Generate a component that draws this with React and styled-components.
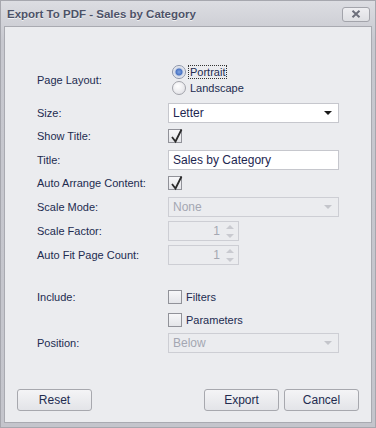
import React from 'react'
import styled, { createGlobalStyle } from 'styled-components'

const Global = createGlobalStyle`
  html, body { margin: 0; padding: 0; background: #c9cad0; }
  body { font-family: "Liberation Sans", Arial, sans-serif; font-size: 11px; }
`

const Window = styled.div`
  width: 376px;
  height: 428px;
  box-sizing: border-box;
  display: flex;
  flex-direction: column;
  background: linear-gradient(#dcdde2, #c7c8cf 40px, #c4c5cc);
  border: 1px solid #a6a7ae;
`

const TitleBar = styled.div`
  height: 25px;
  display: flex;
  align-items: center;
  justify-content: space-between;
  padding: 0 5px 0 6px;
  h1 {
    margin: 0;
    font-size: 11.5px;
    font-weight: bold;
    color: #4d5268;
    text-shadow: 0 1px 0 rgba(255, 255, 255, 0.7);
  }
`

const CloseButton = styled.button`
  width: 28px;
  height: 15px;
  margin-top: 1px;
  padding: 0;
  border: 1px solid #a3a4ab;
  border-radius: 3px;
  background: linear-gradient(#eeeef1, #dedfe3);
  display: flex;
  align-items: center;
  justify-content: center;
`

const Body = styled.div`
  flex: 1;
  margin: 0 3px 4px 3px;
  background: #ebecef;
  border: 1px solid #a9aab1;
  padding: 37px 0 11px 32px;
  display: flex;
  flex-direction: column;
`

const Row = styled.div`
  display: grid;
  grid-template-columns: 131px 171px;
  align-items: center;
  height: ${p => p.$h}px;
  margin-top: ${p => p.$mt || 0}px;
`

const Label = styled.span`
  color: #222b4f;
`

const Radios = styled.div`
  display: flex;
  flex-direction: column;
`

const RadioLine = styled.label`
  display: flex;
  align-items: center;
  height: 16px;
  color: #222b4f;
  span.text {
    padding: 0 1px;
    border: 1px dotted ${p => (p.$focus ? '#333' : 'transparent')};
    line-height: 12px;
    margin-left: 2px;
  }
`

const RadioDot = styled.span`
  width: 12px;
  height: 12px;
  margin-left: 4px;
  border-radius: 50%;
  border: 1px solid ${p => (p.$on ? '#8a93a8' : '#a2a3aa')};
  background: ${p =>
    p.$on
      ? 'radial-gradient(circle, #7fa3e0 0, #4a74c4 3px, #c9d2e4 4px, #f1f2f5 6px)'
      : 'radial-gradient(circle at 40% 35%, #ffffff, #e6e6ea 70%, #d8d9de)'};
`

const Combo = styled.div`
  height: 20px;
  box-sizing: border-box;
  border: 1px solid ${p => (p.$disabled ? '#cdced4' : '#c6c7cd')};
  background: ${p => (p.$disabled ? '#ebecef' : '#ffffff')};
  color: ${p => (p.$disabled ? '#a4a7b2' : '#1d2650')};
  display: flex;
  align-items: center;
  justify-content: space-between;
  padding: 0 6px 0 4px;
  font-size: 12px;
`

const Arrow = styled.span`
  width: 0;
  height: 0;
  border-left: 4px solid transparent;
  border-right: 4px solid transparent;
  border-top: 4px solid ${p => (p.$disabled ? '#c4c5cb' : '#1a1a1a')};
`

const TextBox = styled.div`
  height: 20px;
  box-sizing: border-box;
  border: 1px solid #c6c7cd;
  background: #fff;
  color: #1d2650;
  padding: 0 4px;
  display: flex;
  align-items: center;
  font-size: 12px;
`

const Spin = styled.div`
  width: 71px;
  height: 20px;
  box-sizing: border-box;
  border: 1px solid #cdced4;
  color: #a4a7b2;
  display: flex;
  align-items: center;
  justify-content: flex-end;
  font-size: 12px;
  span.val {
    margin-right: 6px;
  }
`

const SpinArrows = styled.div`
  display: flex;
  flex-direction: column;
  gap: 5px;
  margin-right: 4px;
  i {
    width: 0;
    height: 0;
    border-left: 4px solid transparent;
    border-right: 4px solid transparent;
  }
  i.up { border-bottom: 4px solid #c9cad0; }
  i.down { border-top: 4px solid #c9cad0; }
`

const CheckLine = styled.label`
  display: flex;
  align-items: center;
  color: #222b4f;
  gap: 4px;
`

const Box = styled.span`
  width: 14px;
  height: 14px;
  box-sizing: border-box;
  border: 1px solid #919299;
  background: linear-gradient(#f7f7f9, #e4e5e9);
  position: relative;
  display: inline-block;
  svg {
    position: absolute;
    left: 1px;
    top: -2px;
  }
`

const Footer = styled.div`
  margin-top: auto;
  margin-left: -20px;
  margin-right: 12px;
  display: flex;
  gap: 5px;
`

const Button = styled.button`
  width: 75px;
  height: 22px;
  border: 1px solid #a7a8ae;
  border-radius: 3px;
  background: linear-gradient(#f4f4f6, #e3e4e8);
  color: #222b4f;
  font-family: "Liberation Sans", Arial, sans-serif;
  font-size: 12px;
  padding: 0;
  margin-left: ${p => (p.$push ? 'auto' : '0')};
`

const Check = ({ on }) => (
  <Box>
    {on && (
      <svg width="14" height="16" viewBox="0 0 14 16">
        <path d="M2 9 L5.5 13.5 L11.5 1.5" fill="none" stroke="#2b2b2b" strokeWidth="1.8" />
      </svg>
    )}
  </Box>
)

const SpinBox = ({ value }) => (
  <Spin>
    <span className="val">{value}</span>
    <SpinArrows>
      <i className="up" />
      <i className="down" />
    </SpinArrows>
  </Spin>
)

export default function App() {
  return (
    <>
      <Global />
      <Window>
        <TitleBar>
          <h1>Export To PDF - Sales by Category</h1>
          <CloseButton>
            <svg width="10" height="8" viewBox="0 0 10 8">
              <path d="M1.5 0.8 L8.5 7.2 M8.5 0.8 L1.5 7.2" stroke="#6c6f7b" strokeWidth="2" />
            </svg>
          </CloseButton>
        </TitleBar>
        <Body>
          <Row $h={32}>
            <Label>Page Layout:</Label>
            <Radios>
              <RadioLine $focus>
                <RadioDot $on />
                <span className="text">Portrait</span>
              </RadioLine>
              <RadioLine>
                <RadioDot />
                <span className="text">Landscape</span>
              </RadioLine>
            </Radios>
          </Row>
          <Row $h={20} $mt={7}>
            <Label>Size:</Label>
            <Combo>
              Letter
              <Arrow />
            </Combo>
          </Row>
          <Row $h={18} $mt={4}>
            <Label>Show Title:</Label>
            <CheckLine>
              <Check on />
            </CheckLine>
          </Row>
          <Row $h={20} $mt={5}>
            <Label>Title:</Label>
            <TextBox>Sales by Category</TextBox>
          </Row>
          <Row $h={18} $mt={4}>
            <Label>Auto Arrange Content:</Label>
            <CheckLine>
              <Check on />
            </CheckLine>
          </Row>
          <Row $h={20} $mt={5}>
            <Label>Scale Mode:</Label>
            <Combo $disabled>
              None
              <Arrow $disabled />
            </Combo>
          </Row>
          <Row $h={20} $mt={4}>
            <Label>Scale Factor:</Label>
            <SpinBox value={1} />
          </Row>
          <Row $h={20} $mt={4}>
            <Label>Auto Fit Page Count:</Label>
            <SpinBox value={1} />
          </Row>
          <Row $h={16} $mt={24}>
            <Label>Include:</Label>
            <CheckLine>
              <Check />
              Filters
            </CheckLine>
          </Row>
          <Row $h={16} $mt={7}>
            <span />
            <CheckLine>
              <Check />
              Parameters
            </CheckLine>
          </Row>
          <Row $h={20} $mt={5}>
            <Label>Position:</Label>
            <Combo $disabled>
              Below
              <Arrow $disabled />
            </Combo>
          </Row>
          <Footer>
            <Button>Reset</Button>
            <Button $push>Export</Button>
            <Button>Cancel</Button>
          </Footer>
        </Body>
      </Window>
    </>
  )
}
